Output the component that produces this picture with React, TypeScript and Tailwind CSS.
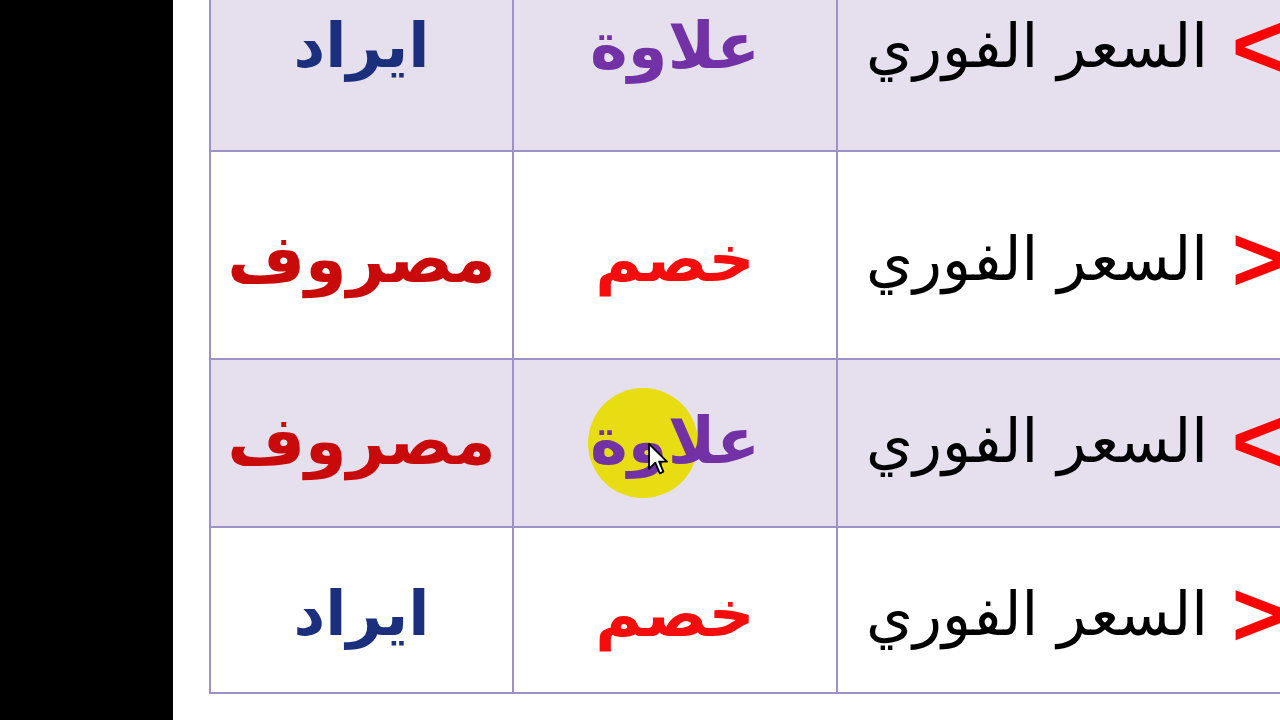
import React from "react";

const ARABIC = "font-['DejaVu_Sans',sans-serif]";

type Word = { text: string; color: string; size: string };

type Row = {
  h: string;
  bg: string;
  shift: string;
  left: Word;
  mid: Word;
  sign: string;
  highlight?: boolean;
};

const IRAD: Word = { text: "ايراد", color: "text-[#1b2f7c]", size: "text-[62px]" };
const MASROOF: Word = { text: "مصروف", color: "text-[#c80a0a]", size: "text-[67px]" };
const ALAWA: Word = { text: "علاوة", color: "text-[#7232a6]", size: "text-[64px]" };
const KHASM: Word = { text: "خصم", color: "text-[#f50c0c]", size: "text-[64px]" };

const rows: Row[] = [
  { h: "h-[152px]", bg: "bg-[#e6e0ee]", shift: "pb-[62px]", left: IRAD, mid: ALAWA, sign: "<" },
  { h: "h-[208px]", bg: "bg-white", shift: "pt-[8px]", left: MASROOF, mid: KHASM, sign: ">" },
  { h: "h-[168px]", bg: "bg-[#e6e0ee]", shift: "pb-[4px]", left: MASROOF, mid: ALAWA, sign: "<", highlight: true },
  { h: "h-[166px]", bg: "bg-white", shift: "pt-[8px]", left: IRAD, mid: KHASM, sign: ">" },
];

function Cursor() {
  return (
    <svg className="absolute left-[133px] top-[82px] w-[22px] h-[34px]" viewBox="0 0 12 19">
      <path d="M1 1 L1 15 L4.5 11.5 L7 17.5 L9 16.6 L6.6 11 L11 11 Z" fill="white" stroke="black" strokeWidth="1" strokeLinejoin="round" />
    </svg>
  );
}

export default function App() {
  return (
    <div className="w-[1280px] h-[720px] flex overflow-hidden bg-white">
      <div className="w-[173px] shrink-0 bg-black" />
      <div className="flex-1 pl-[36px] overflow-hidden">
        <div className="w-[1200px] border-l-2 border-[#9d92c8]">
          {rows.map((r, i) => (
            <div key={i} className={`grid grid-cols-[303px_324px_1fr] border-b-2 border-[#9d92c8] ${r.h} ${r.bg}`}>
              <div className={`flex items-center justify-center border-r-2 border-[#9d92c8] ${r.shift}`}>
                <span dir="rtl" className={`${ARABIC} font-bold leading-none ${r.left.size} ${r.left.color}`}>{r.left.text}</span>
              </div>
              <div className={`relative flex items-center justify-center border-r-2 border-[#9d92c8] ${r.shift}`}>
                {r.highlight && (
                  <div className="absolute left-[74px] top-[28px] w-[110px] h-[110px] rounded-full bg-[#e8dc12]" />
                )}
                <span dir="rtl" className={`relative ${ARABIC} font-bold leading-none ${r.mid.size} ${r.mid.color}`}>{r.mid.text}</span>
                {r.highlight && <Cursor />}
              </div>
              <div className={`flex items-center pl-[28px] gap-[24px] ${r.shift}`}>
                <span dir="rtl" className={`${ARABIC} text-[60px] leading-none text-black`}>السعر الفوري</span>
                <span className="font-['Liberation_Sans',sans-serif] font-bold text-[92px] leading-none text-[#ff0000]">{r.sign}</span>
              </div>
            </div>
          ))}
        </div>
      </div>
    </div>
  );
}
